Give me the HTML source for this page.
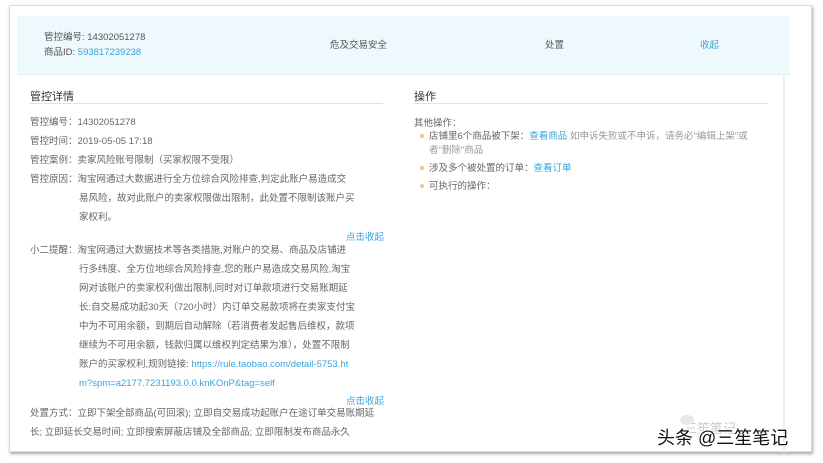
<!DOCTYPE html>
<html><head><meta charset="utf-8"><style>
*{margin:0;padding:0;box-sizing:border-box}
body{width:823px;height:463px;background:#fff;font-family:"Liberation Sans","Noto Sans CJK SC",sans-serif;font-size:9.5px;color:#666;position:relative;overflow:hidden}
.frame{position:absolute;left:9px;top:5px;width:803px;height:447px;border:1px solid #ddd;box-shadow:1px 2px 3px rgba(0,0,0,.35);background:#fff}
.head{position:absolute;left:17px;top:16px;width:773px;height:59px;background:#eef9fe;border-bottom:1px solid #e3eef3}
.a{position:absolute;white-space:nowrap}
.blue{color:#3aa3dd}
.panel{position:absolute;left:17px;top:75px;width:768px;height:377px;border-right:2px solid #eee}
.h{font-size:11px;color:#333}
.rule{position:absolute;height:1px;background:#e2e2e2}
.ln{position:absolute;left:30px;white-space:nowrap;line-height:19px}
.ind{left:79px}
.dot{display:inline-block;width:4px;height:4px;border-radius:50%;background:#f5c48a;margin-right:5px;vertical-align:middle}
.wm{position:absolute;left:657px;top:424px;font-size:18px;color:#111;text-shadow:1px 1px 0 #fff,-1px -1px 0 #fff;white-space:nowrap}
</style></head><body>
<div class="frame"></div>
<div class="head"></div>
<div class="a" style="left:44px;top:29px;color:#555">管控编号: 14302051278</div>
<div class="a" style="left:44px;top:44px;color:#555">商品ID: <span class="blue">593817239238</span></div>
<div class="a" style="left:330px;top:37px;color:#555">危及交易安全</div>
<div class="a" style="left:545px;top:37px;color:#555">处置</div>
<div class="a blue" style="left:700px;top:37px">收起</div>
<div class="panel"></div>
<div class="a h" style="left:30px;top:88px">管控详情</div>
<div class="rule" style="left:30px;top:103px;width:353px"></div>
<div class="a h" style="left:414px;top:88px">操作</div>
<div class="rule" style="left:414px;top:103px;width:354px"></div>

<div class="ln" style="top:113px">管控编号：14302051278</div>
<div class="ln" style="top:132px">管控时间：2019-05-05 17:18</div>
<div class="ln" style="top:151px">管控案例：卖家风险账号限制（买家权限不受限）</div>
<div class="ln" style="top:170px">管控原因：淘宝网通过大数据进行全方位综合风险排查,判定此账户易造成交</div>
<div class="ln ind" style="top:189px">易风险，故对此账户的卖家权限做出限制，此处置不限制该账户买</div>
<div class="ln ind" style="top:208px">家权利。</div>
<div class="a blue" style="left:346px;top:229px">点击收起</div>
<div class="ln" style="top:241px">小二提醒：淘宝网通过大数据技术等各类措施,对账户的交易、商品及店铺进</div>
<div class="ln ind" style="top:260px">行多纬度、全方位地综合风险排查,您的账户易造成交易风险,淘宝</div>
<div class="ln ind" style="top:279px">网对该账户的卖家权利做出限制,同时对订单款项进行交易账期延</div>
<div class="ln ind" style="top:298px">长:自交易成功起30天（720小时）内订单交易款项将在卖家支付宝</div>
<div class="ln ind" style="top:317px">中为不可用余额，到期后自动解除（若消费者发起售后维权，款项</div>
<div class="ln ind" style="top:336px">继续为不可用余额，钱款归属以维权判定结果为准），处置不限制</div>
<div class="ln ind" style="top:355px">账户的买家权利,规则链接: <span class="blue">https://rule.taobao.com/detail-5753.ht</span></div>
<div class="ln ind blue" style="top:374px">m?spm=a2177.7231193.0.0.knKOnP&amp;tag=self</div>
<div class="a blue" style="left:346px;top:393px">点击收起</div>
<div class="ln" style="top:404px">处置方式：立即下架全部商品(可回滚); 立即自交易成功起账户在途订单交易账期延</div>
<div class="ln" style="top:423px">长; 立即延长交易时间; 立即搜索屏蔽店铺及全部商品; 立即限制发布商品永久</div>

<div class="a" style="left:414px;top:115px">其他操作：</div>
<div class="a" style="left:420px;top:128px"><span class="dot"></span>店铺里6个商品被下架：<span class="blue">查看商品</span> <span style="color:#999">如申诉失败或不申诉，请务必"编辑上架"或</span></div>
<div class="a" style="left:429px;top:142px;color:#999">者"删除"商品</div>
<div class="a" style="left:420px;top:160px"><span class="dot"></span>涉及多个被处置的订单：<span class="blue">查看订单</span></div>
<div class="a" style="left:420px;top:178px"><span class="dot"></span>可执行的操作：</div>

<div class="a" style="left:684px;top:418px;font-size:13px;color:#ccc">三笙笔记</div>
<div class="a" style="left:680px;top:415px;width:14px;height:10px;border-radius:50%;background:#e8e8e8"></div>
<div class="wm">头条 @三笙笔记</div>
</body></html>
